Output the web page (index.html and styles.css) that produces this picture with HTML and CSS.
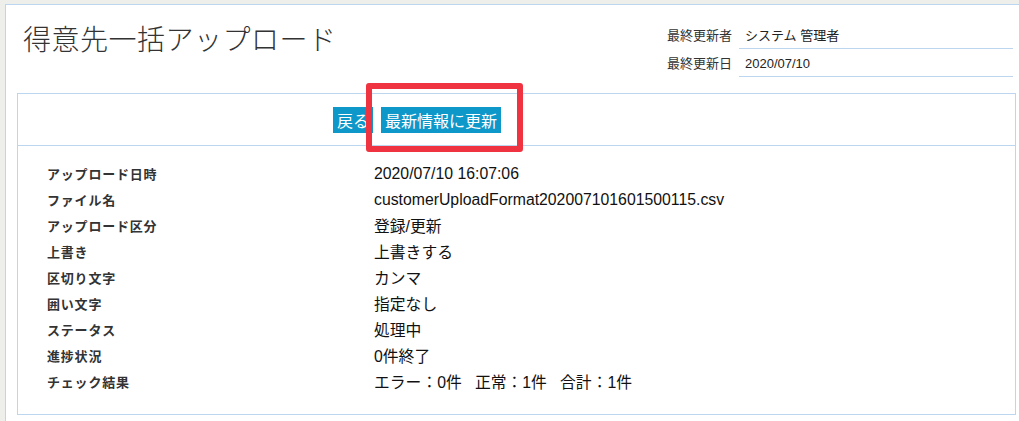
FILE: index.html
```html
<!DOCTYPE html>
<html lang="ja">
  <head>
    <meta charset="UTF-8" />
    <meta name="viewport" content="width=device-width, initial-scale=1.0" />
    <title>得意先一括アップロード</title>
    <link rel="stylesheet" href="styles.css">
  </head>
  <body>
    <div class="page">
      <!-- header -->
      <div class="header">
        <h1 class="title">得意先一括アップロード</h1>
        <table class="meta">
          <tr>
            <th>最終更新者</th>
            <td>システム 管理者</td>
          </tr>
          <tr>
            <th>最終更新日</th>
            <td>2020/07/10</td>
          </tr>
        </table>
      </div>

      <!-- upload detail -->
      <div class="box">
        <div class="toolbar">
          <button type="button" class="btn">戻る</button>
          <button type="button" class="btn">最新情報に更新</button>
        </div>
        <dl class="detail">
          <div class="row"><dt>アップロード日時</dt><dd>2020/07/10 16:07:06</dd></div>
          <div class="row"><dt>ファイル名</dt><dd>customerUploadFormat202007101601500115.csv</dd></div>
          <div class="row"><dt>アップロード区分</dt><dd>登録/更新</dd></div>
          <div class="row"><dt>上書き</dt><dd>上書きする</dd></div>
          <div class="row"><dt>区切り文字</dt><dd>カンマ</dd></div>
          <div class="row"><dt>囲い文字</dt><dd>指定なし</dd></div>
          <div class="row"><dt>ステータス</dt><dd>処理中</dd></div>
          <div class="row"><dt>進捗状況</dt><dd>0件終了</dd></div>
          <div class="row"><dt>チェック結果</dt><dd>エラー：0件&nbsp;&nbsp;&nbsp;正常：1件&nbsp;&nbsp;&nbsp;合計：1件</dd></div>
        </dl>
      </div>

      <!-- screenshot annotation -->
      <div class="mark"></div>
    </div>
  </body>
</html>
```

FILE: styles.css
```css
* {
  box-sizing: border-box;
  margin: 0;
  padding: 0;
}

:root {
  --line: #bcd6ef;
  --primary: #0e97c9;
  --text: #333333;
}

body {
  background-color: #eeeeea;
  padding: 4px 0 0 5px;
  font-family: 'Liberation Sans', 'Noto Sans CJK JP', sans-serif;
  color: var(--text);
  overflow: hidden;
  height: 421px;
}

.page {
  position: relative;
  background-color: white;
  border-left: 1px solid var(--line);
  border-top: 1px solid var(--line);
  width: 1030px;
  height: 430px;
  padding-left: 11px;
}

.header {
  display: flex;
  justify-content: space-between;
  height: 88px;
  width: 998px;
}

.title {
  font-family: 'Noto Sans CJK JP', sans-serif;
  font-weight: 300;
  font-size: 28px;
  letter-spacing: 0.5px;
  color: #333;
  padding: 13px 0 0 6px;
  line-height: 40px;
}

.meta {
  border-collapse: collapse;
  margin-top: 15px;
  margin-right: 2px;
  align-self: flex-start;
  font-size: 13px;
}

.meta th {
  font-family: 'Noto Sans CJK JP', sans-serif;
  font-weight: 400;
  text-align: left;
  padding: 0 7px 0 0;
  height: 28px;
  vertical-align: middle;
  color: #333;
}

.meta td {
  width: 274px;
  border-bottom: 1px solid var(--line);
  padding: 2px 6px 0 6px;
  color: #222;
}

.box {
  border: 1px solid var(--line);
  width: 999px;
  height: 322px;
}

.toolbar {
  display: flex;
  gap: 8px;
  align-items: center;
  height: 52px;
  padding-left: 315px;
  border-bottom: 1px solid var(--line);
}

.btn {
  background-color: var(--primary);
  color: white;
  border: none;
  font-family: 'Liberation Sans', 'Noto Sans CJK JP', sans-serif;
  font-size: 16px;
  height: 26px;
  padding: 0 4px;
  cursor: pointer;
}

.detail {
  padding: 15px 0 0 29px;
}

.row {
  display: flex;
  height: 25.9px;
  align-items: center;
}

.row dt {
  width: 327px;
  font-family: 'Noto Sans CJK JP', sans-serif;
  font-weight: 700;
  font-size: 13px;
  letter-spacing: 0.8px;
  color: #333;
}

.row dd {
  font-size: 15.8px;
  color: #111;
}

.mark {
  position: absolute;
  left: 360px;
  top: 78px;
  width: 157px;
  height: 69px;
  border: 6px solid #ef3340;
  border-radius: 3px;
}
```
